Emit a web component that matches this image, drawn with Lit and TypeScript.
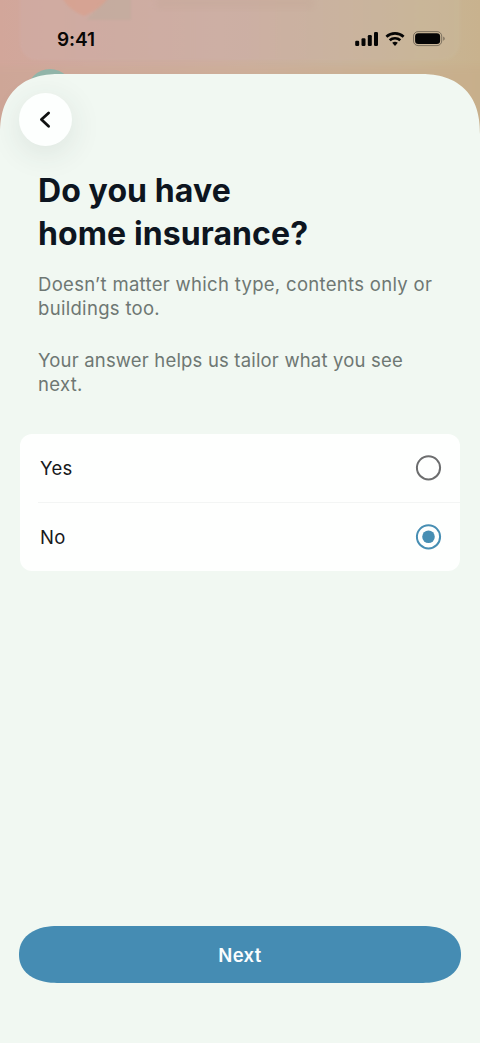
import { LitElement, html, css, svg } from "lit";
import { customElement, property, state } from "lit/decorators.js";

@customElement("status-bar")
class StatusBar extends LitElement {
  static styles = css`
    :host { display: flex; justify-content: space-between; align-items: center; height: 22px; padding: 28px 35px 24px 57px; }
    .time { padding-top: 1px; font: 600 19px/22px Inter, sans-serif; letter-spacing: -0.1px; color: #080706; }
    svg { display: block; }
  `;
  render() {
    return html`
      <span class="time">9:41</span>
      <svg width="90" height="18" viewBox="0 0 90 18" fill="#050505">
        <rect x="0.2" y="10.7" width="4" height="5.2" rx="1.2" />
        <rect x="6.5" y="8.2" width="4" height="7.7" rx="1.2" />
        <rect x="12.8" y="5.1" width="4" height="10.8" rx="1.2" />
        <rect x="19" y="2" width="4" height="13.9" rx="1.2" />
        <g fill="none" stroke="#050505" stroke-width="2.7">
          <path d="M31.4 6.7a12.7 12.7 0 0 1 17.2 0" />
          <path d="M34.7 10.3a7.9 7.9 0 0 1 10.6 0" />
        </g>
        <path d="M37.2 12.7a4.6 4.6 0 0 1 5.6 0L40 16z" />
        <rect x="58.5" y="1.6" width="28.2" height="14" rx="4.6" fill="none" stroke="#4b453b" stroke-opacity=".6" />
        <rect x="60.1" y="3.2" width="25" height="10.8" rx="3.3" />
        <path d="M88.3 6.5c1.8.8 1.8 3.4 0 4.2z" fill="#4b453b" fill-opacity=".7" />
      </svg>
    `;
  }
}

@customElement("radio-row")
class RadioRow extends LitElement {
  @property() label = "";
  @property({ type: Boolean }) checked = false;
  static styles = css`
    :host { display: flex; align-items: center; justify-content: space-between; height: 68px; padding: 0 18.5px 0 20px; cursor: pointer; }
    .label { padding-top: 1px; font: 400 18.5px/24px Inter, sans-serif; letter-spacing: 0.3px; color: #17191b; }
    svg { display: block; }
  `;
  render() {
    const color = this.checked ? "#478eb3" : "#6c6d6e";
    return html`
      <span class="label">${this.label}</span>
      <svg width="27" height="27" viewBox="0 0 27 27">
        <circle cx="13.5" cy="13.8" r="11.6" fill="none" stroke=${color} stroke-width="2" />
        ${this.checked ? svg`<circle cx="13.5" cy="13.8" r="6.3" fill=${color} />` : null}
      </svg>
    `;
  }
}

@customElement("app-root")
class AppRoot extends LitElement {
  @state() private answer = "No";
  static styles = css`
    :host {
      display: flex; flex-direction: column; position: relative; box-sizing: border-box;
      width: 480px; height: 1043px; overflow: hidden;
      font-family: Inter, sans-serif;
      background: linear-gradient(90deg, #d2a69a 0, #cfaa9f 90px, #cdae9f 220px, #c9b39d 340px, #c9b595 420px, #c8b28e 480px);
    }
    .backdrop { position: absolute; left: 0; top: 0; }
    status-bar { position: relative; }
    .sheet {
      position: relative; flex: 1; display: flex; flex-direction: column; box-sizing: border-box;
      padding: 19px 19px 60px; background: #f1f8f2; border-radius: 50px 50px 0 0;
    }
    @supports (corner-shape: superellipse(1.2)) {
      .sheet { border-radius: 60px 60px 0 0; corner-shape: superellipse(1.25); }
      .next { border-radius: 38px / 28.5px !important; corner-shape: superellipse(1.15); }
    }
    .back {
      display: grid; place-items: center; width: 53px; height: 53px; padding: 0; border: 0; border-radius: 50%;
      background: #fdfffe; box-shadow: 0 7px 32px rgba(50, 65, 60, 0.11);
    }
    .back svg { display: block; margin-left: -2px; }
    h1 { margin: 23px 0 0 19px; font-size: 32px; line-height: 43px; font-weight: 700; letter-spacing: 0.1px; color: #0d1520; }
    h1 span, p span { display: block; white-space: nowrap; }
    p { margin: 0 0 0 19px; font-size: 18.5px; line-height: 24px; letter-spacing: 0.31px; color: #6e7773; }
    .first { margin-top: 17px; }
    .second { margin-top: 28px; }
    .second span:first-child { letter-spacing: 0.18px; }
    .options { margin: 37.5px 1px 0; border-radius: 12px; background: #fefffe; overflow: hidden; }
    .divider { height: 1px; margin-left: 18px; background: #f3f5f4; }
    .next {
      margin-top: auto; height: 57px; padding: 0; border: 0; border-radius: 28.5px; background: #458cb3;
      color: #fbfdfe; font: 600 18.5px/24px Inter, sans-serif; letter-spacing: 0.35px;
    }
  `;
  render() {
    return html`
      <svg class="backdrop" width="480" height="130" viewBox="0 0 480 130">
        <defs>
          <filter id="soft" x="-20%" y="-20%" width="140%" height="140%"><feGaussianBlur stdDeviation="3" /></filter>
          <filter id="edge" x="-20%" y="-20%" width="140%" height="140%"><feGaussianBlur stdDeviation="1" /></filter>
          <linearGradient id="card" x1="0" x2="1"><stop stop-color="#d0aca4" /><stop offset=".5" stop-color="#cdb0a7" /><stop offset="1" stop-color="#c9b899" /></linearGradient>
          <linearGradient id="low" x1="0" x2="1"><stop stop-color="#cda697" /><stop offset=".5" stop-color="#cdae97" /><stop offset="1" stop-color="#c7ae89" /></linearGradient>
        </defs>
        <path d="M-20 66H500V150H-20Z" fill="url(#low)" opacity=".7" filter="url(#soft)" />
        <rect x="20" y="-30" width="440" height="90" rx="17" fill="url(#card)" opacity=".65" filter="url(#edge)" />
        <path d="M86 20 108-4H131V20Z" fill="#c2ac9e" opacity=".7" filter="url(#edge)" />
        <path d="M62-2H108Q101 9 84 16 70 11 62-2Z" fill="#d9a08d" opacity=".7" filter="url(#edge)" />
        <rect x="156" y="-3" width="158" height="12" fill="#c4a797" opacity=".35" filter="url(#soft)" />
        <circle cx="50" cy="92" r="23" fill="#91b5a9" />
      </svg>
      <status-bar></status-bar>
      <main class="sheet">
        <button class="back" aria-label="Back">
          <svg width="20" height="24" viewBox="0 0 20 24" fill="none" stroke="#101211" stroke-width="2.8" stroke-linecap="round" stroke-linejoin="round">
            <path d="M13.6 4.9 6.4 11.6l7.2 6.7" />
          </svg>
        </button>
        <h1><span>Do you have</span><span>home insurance?</span></h1>
        <p class="first"><span>Doesn’t matter which type, contents only or</span><span>buildings too.</span></p>
        <p class="second"><span>Your answer helps us tailor what you see</span><span>next.</span></p>
        <div class="options">
          <radio-row label="Yes" ?checked=${this.answer === "Yes"} @click=${() => (this.answer = "Yes")}></radio-row>
          <div class="divider"></div>
          <radio-row label="No" ?checked=${this.answer === "No"} @click=${() => (this.answer = "No")}></radio-row>
        </div>
        <button class="next">Next</button>
      </main>
    `;
  }
}
